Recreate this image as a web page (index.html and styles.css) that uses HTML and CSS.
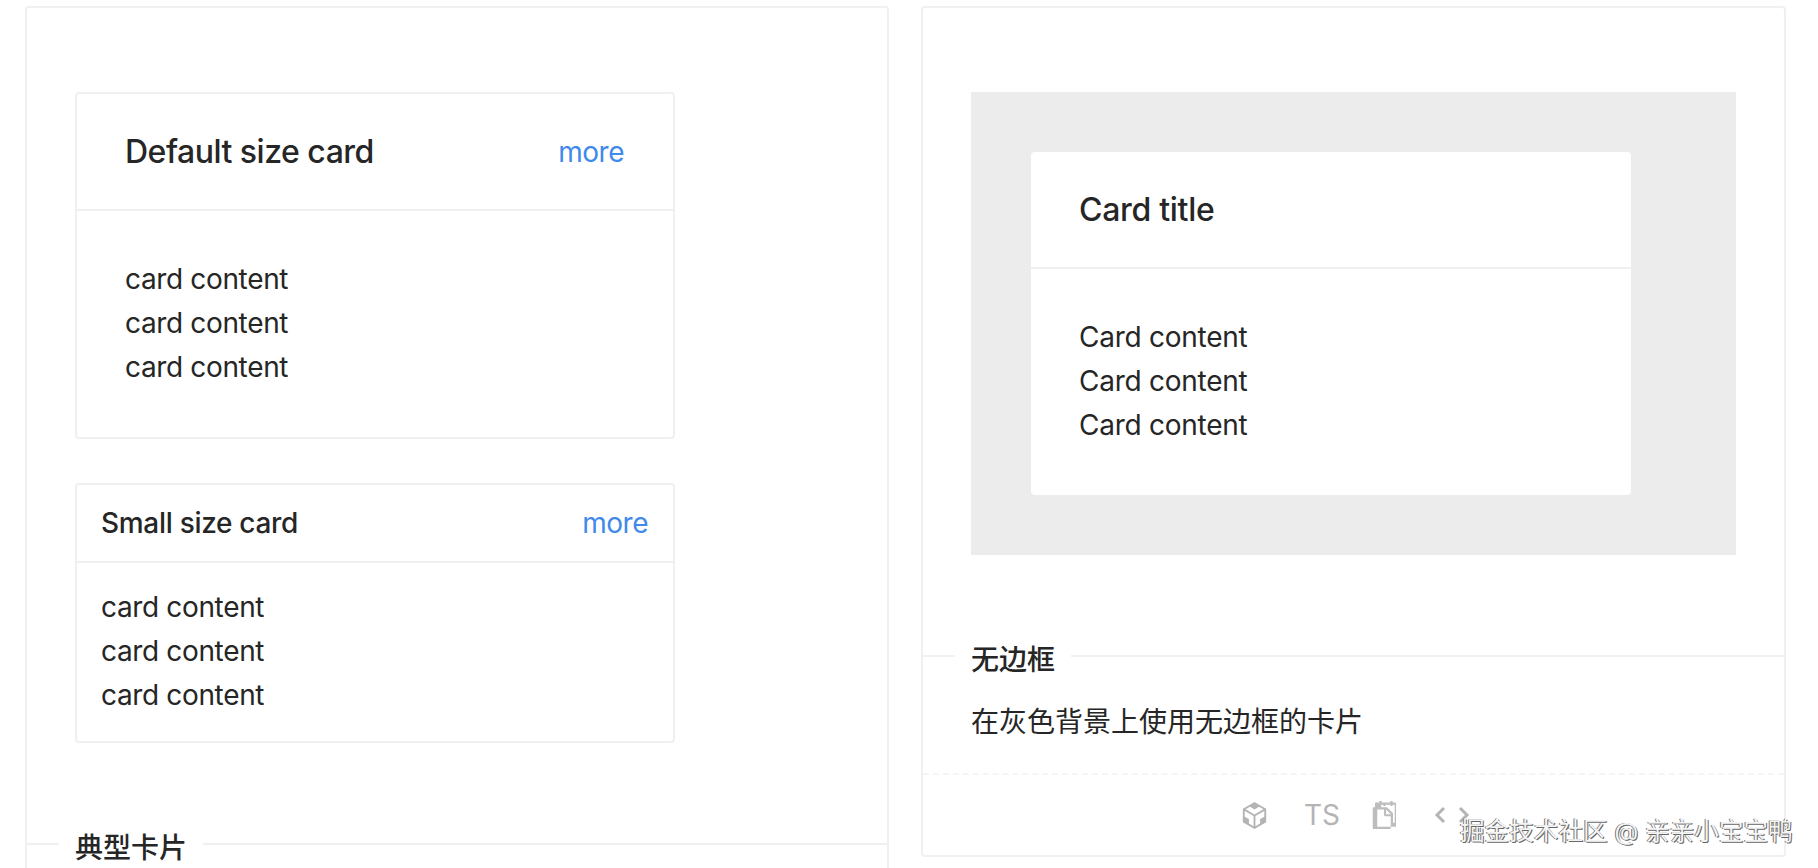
FILE: index.html
```html
<!DOCTYPE html>
<html lang="zh-CN">
<head>
    <meta charset="UTF-8">
    <title>Card</title>
    <link rel="stylesheet" href="styles.css">
</head>
<body>
    <div class="page">
        <!-- Левая колонка -->
        <div class="box box-left">
            <div class="demo">
                <div class="card">
                    <div class="card-head">
                        <span class="card-title">Default size card</span>
                        <a class="more">more</a>
                    </div>
                    <div class="card-body">
                        <p>card content</p>
                        <p>card content</p>
                        <p>card content</p>
                    </div>
                </div>
                <div class="card card-small">
                    <div class="card-head">
                        <span class="card-title">Small size card</span>
                        <a class="more">more</a>
                    </div>
                    <div class="card-body">
                        <p>card content</p>
                        <p>card content</p>
                        <p>card content</p>
                    </div>
                </div>
            </div>
            <div class="divider"><span class="divider-text">典型卡片</span></div>
        </div>

        <!-- Правая колонка -->
        <div class="box box-right">
            <div class="demo">
                <div class="gray-bg">
                    <div class="card card-plain">
                        <div class="card-head">
                            <span class="card-title">Card title</span>
                        </div>
                        <div class="card-body">
                            <p>Card content</p>
                            <p>Card content</p>
                            <p>Card content</p>
                        </div>
                    </div>
                </div>
            </div>
            <div class="divider"><span class="divider-text">无边框</span></div>
            <div class="desc">在灰色背景上使用无边框的卡片</div>
            <div class="actions">
                <svg class="icon-cube" viewBox="64 64 896 896" fill="currentColor"><path d="M709.6 210l.4-.2h.2L512 96 313.9 209.8h-.2l.7.3L151.5 304v416L512 928l360.5-208V304l-162.9-94zM482.7 843.6L339.6 761V621.4L210 547.8V372.9l272.7 157.3v313.4zM238.2 321.5l134.7-77.8 138.9 79.7 139.1-79.9 135.2 78-273.9 158-274-158zM814 548.3l-128.8 73.1v139.1l-143.9 83V530.4L814 373.1v175.2z"/></svg>
                <span class="ts">TS</span>
                <svg class="icon-snippets" viewBox="64 64 896 896" fill="currentColor"><path d="M832 112H724V72c0-4.4-3.6-8-8-8h-56c-4.4 0-8 3.6-8 8v40H372V72c0-4.4-3.6-8-8-8h-56c-4.4 0-8 3.6-8 8v40H192c-17.7 0-32 14.3-32 32v120h-40c-17.7 0-32 14.3-32 32v632c0 17.7 14.3 32 32 32h512c17.7 0 32-14.3 32-32v-40h136c17.7 0 32-14.3 32-32V144c0-17.7-14.3-32-32-32zM664 888H232V336h218v174c0 22.1 17.9 40 40 40h174v338zm0-402H514V336h.2L664 485.8v.2zm128 274h-56V456L544 264H360v-80h68v32c0 4.4 3.6 8 8 8h56c4.4 0 8-3.6 8-8v-32h152v32c0 4.4 3.6 8 8 8h56c4.4 0 8-3.6 8-8v-32h68v576z"/></svg>
                <svg class="icon-code" viewBox="0 0 36 18" fill="none" stroke="currentColor" stroke-width="3"><polyline points="10,2 3,9 10,16"/><polyline points="26,2 33,9 26,16"/></svg>
            </div>
        </div>
    </div>

    <!-- Водяной знак -->
    <div class="watermark">掘金技术社区 @ 亲亲小宝宝鸭</div>
</body>
</html>
```

FILE: styles.css
```css
* {
    margin: 0;
    padding: 0;
    box-sizing: border-box;
}
body, html {
    height: 100%;
    overflow: hidden;
    background: #fff;
}
body {
    position: relative;
    font-family: "Inter", "Noto Sans CJK SC", sans-serif;
    font-size: 28px;
    line-height: 44px;
    color: #262626;
}
.page {
    display: grid;
    grid-template-columns: 864px 865px;
    column-gap: 32px;
    align-items: start;
    padding: 6px 0 0 25px;
}
.box {
    border: 2px solid #f0f0f0;
    border-radius: 4px;
}
.box-left {
    height: 1000px;
}
.demo {
    padding: 84px 48px 0;
}

/* Карточки */
.card {
    width: 600px;
    border: 2px solid #f0f0f0;
    border-radius: 4px;
    background: #fff;
}
.card-head {
    display: flex;
    justify-content: space-between;
    align-items: center;
    height: 117px;
    padding: 0 48px;
    border-bottom: 2px solid #f0f0f0;
}
.card-title {
    font-size: 32px;
    font-weight: 500;
    letter-spacing: -0.5px;
}
.card-body {
    padding: 46px 48px 48px;
    letter-spacing: -0.35px;
}
.more {
    margin-right: 1px;
    color: #4189ea;
    letter-spacing: -0.5px;
}
.card-small {
    margin-top: 44px;
}
.card-small .card-head {
    height: 78px;
    padding: 0 24px;
}
.card-small .card-title {
    font-size: 28px;
    letter-spacing: -0.3px;
}
.card-small .card-body {
    padding: 22px 24px 24px;
}
.gray-bg {
    padding: 60px;
    background: #ececec;
}
.card-plain {
    border: none;
}
.card-plain .card-head {
    height: 117px;
}
.card-plain .card-title {
    letter-spacing: -0.3px;
}
.card-plain .card-body {
    padding: 46px 48px 48px;
    letter-spacing: -0.25px;
}

/* Разделитель */
.divider {
    display: flex;
    align-items: center;
    height: 50px;
    margin-top: 76px;
}
.divider::before {
    content: "";
    width: 32px;
    border-top: 2px solid #f0f0f0;
}
.divider::after {
    content: "";
    flex: 1;
    border-top: 2px solid #f0f0f0;
}
.divider-text {
    padding: 8px 16px 0;
    font-weight: 500;
}
.desc {
    margin-top: 19px;
    padding: 0 48px 29px;
    border-bottom: 2px dashed #f5f5f5;
}

/* Панель действий */
.actions {
    display: flex;
    justify-content: center;
    align-items: center;
    gap: 38px;
    height: 80px;
    padding-left: 6px;
    color: #b4b4b4;
}
.ts {
    font-size: 28px;
    width: 33px;
}
.icon-cube {
    width: 29px;
    height: 29px;
    margin: 0 -3px;
}
.icon-snippets {
    width: 28px;
    height: 28px;
    margin: 0 -3px;
    color: #bdbdbd;
}
.icon-code {
    width: 36px;
    height: 18px;
    margin-left: -1px;
}
.watermark {
    position: absolute;
    left: 1460px;
    top: 813px;
    font-size: 24.6px;
    line-height: 36px;
    color: #f4f4f4;
    white-space: nowrap;
    text-shadow: -1px 0 0 #777, 1px 1px 0 #666;
}
```
